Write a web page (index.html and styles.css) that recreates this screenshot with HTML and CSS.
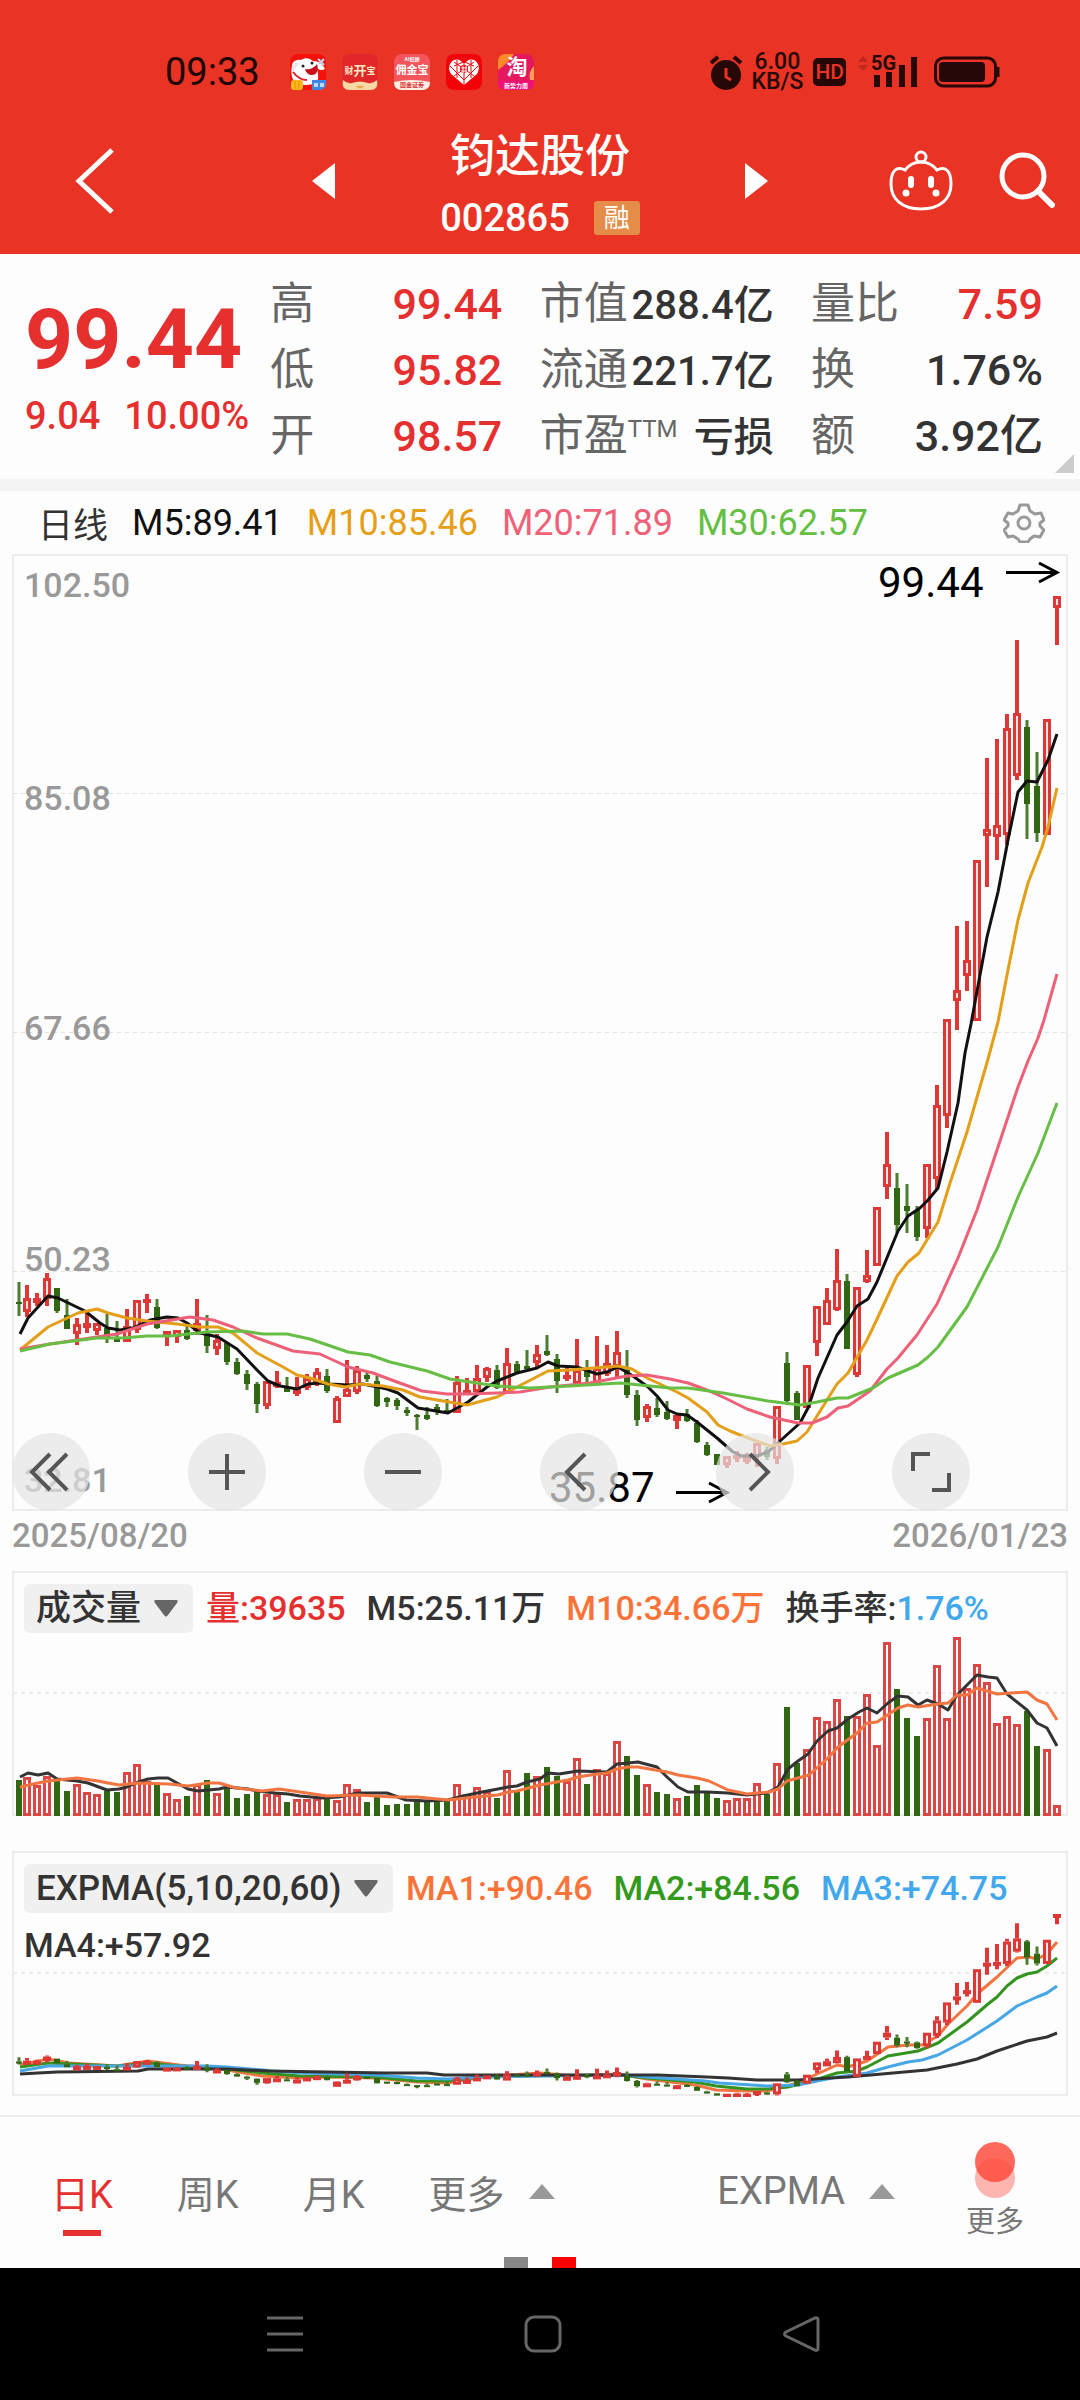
FILE: index.html
```html
<!DOCTYPE html>
<html lang="zh-CN">
<head>
<meta charset="utf-8">
<meta name="viewport" content="width=device-width, initial-scale=1">
<title>钧达股份 002865</title>
<link rel="stylesheet" href="styles.css">
</head>
<body>
<header class="top">
  <div class="status">
    <span class="clock">09:33</span>
    <div class="apps">
      <svg class="app" viewBox="0 0 36 36"><rect width="36" height="36" rx="8" fill="#f5120d"/><path d="M2 12c0-5 5-7 9-6 4-3 9-2 12 1 5 0 10 3 12 8-3 2-6 1-8-1 1 5 2 10 0 14-6 4-17 4-23-1-3-4-3-11-2-15z" fill="#fff"/><path d="M2 12c2-3 5-4 8-3-3 3-5 6-7 9z" fill="#e8e8ee"/><circle cx="13" cy="12" r="1.500" fill="#222"/><circle cx="22" cy="9" r="1.500" fill="#222"/><path d="M15 15c5 1 9-1 12-5 2 6 0 11-5 11-3 0-6-2-7-6z" fill="#c8101c"/><path d="M3 18q6 8 14 8" fill="none" stroke="#e0202a" stroke-width="2"/><path d="M28 5l6 6M34 5l-5 5" stroke="#bcd8ff" stroke-width="2"/><rect x="1" y="26" width="12" height="10" rx="3" fill="#fbb81a"/><path d="M5 27v8M9 27v8" stroke="#e88f0c" stroke-width="1"/><path d="M22 26h14v3q0 7-7 7h-7z" fill="#3f86e8"/><path d="M24 29h4v4h-4zM30 29h4v4h-4z" fill="#bcd8ff"/></svg>
      <svg class="app" viewBox="0 0 36 36"><rect width="36" height="36" rx="8" fill="#e1272a"/><path d="M1 26q4 4 9 3 8-3 16 0 5 1 9-3 2 10-7 10H8q-9 0-7-10z" fill="#f8d9a4"/><path d="M14 32q4 5 8 0z" fill="#f0a24a"/><text x="7" y="20" class="app-text" font-size="9" fill="#ffe9c4">财</text><text x="18" y="21" class="app-text" font-size="13" fill="#ffe9c4">开</text><text x="29" y="20" class="app-text" font-size="9" fill="#ffe9c4">宝</text></svg>
      <svg class="app" viewBox="0 0 36 36"><rect width="36" height="36" rx="8" fill="#f4545c"/><path d="M0 28q18-4 36 0 0 8-8 8H8q-8 0-8-8z" fill="#fff0e6"/><text x="18" y="7" class="app-text" font-size="5" fill="#fff">AI投顾</text><text x="18" y="20" class="app-text" font-size="11" fill="#fff">佣金宝</text><text x="18" y="33" class="app-text" font-size="6" fill="#d33">国金证券</text></svg>
      <svg class="app" viewBox="0 0 36 36"><rect width="36" height="36" rx="8" fill="#f40009"/><path d="M18 31L5 20C0 12 6 3 14 6l4 4 4-4c8-3 14 6 9 14z" fill="#fff"/><path d="M4 12l14 14M8 8l20 14M14 6l14 6M32 12L18 26M28 8L8 22M22 6L8 12M11 6v18M25 6v18M18 10v4M18 19v12" stroke="#f40009" stroke-width="1"/><circle cx="18" cy="15" r="4" fill="#f40009"/><path d="M15 14h6M15 17h6M17 12v7M20 12v7" stroke="#fff"/></svg>
      <svg class="app" viewBox="0 0 36 36"><rect width="36" height="36" rx="8" fill="#e5185f"/><path d="M0 16V8q0-8 8-8h8q-4 8-16 16z" fill="#ff8a2a"/><path d="M36 12q-6 6-4 14h4z" fill="#ffa05a"/><path d="M0 27h36v1q0 8-8 8H8q-8 0-8-8z" fill="#f0107a"/><text x="19" y="20" class="app-text" font-size="21" fill="#fff">淘</text><text x="18" y="34" class="app-text" font-size="6" fill="#fff">新势力周</text></svg>
    </div>
    <div class="status-right">
      <svg class="alarm" viewBox="0 0 34 36"><circle cx="17" cy="21" r="15" fill="#260906"/><path d="M2 9l7-6M25 3l7 6" stroke="#260906" stroke-width="4"/><path d="M17 14v9l5 3" fill="none" stroke="#e93325" stroke-width="3"/></svg>
      <span class="speed">6.00<br>KB/S</span>
      <span class="hd">HD</span>
      <svg class="signal" viewBox="0 0 60 34"><path d="M0 7l5-6 5 6zM0 10h10l-5 6z" fill="#bd2a1c"/><text x="13" y="15" class="net">5G</text><path d="M16 20h6v12h-6zM28 17h6v15h-6zM41 10h6v22h-6zM53 2h6v30h-6z" fill="#260906"/></svg>
      <svg class="battery" viewBox="0 0 66 32"><rect x="1.500" y="2" width="60" height="28" rx="8" fill="none" stroke="#260906" stroke-width="3"/><rect x="5" y="6" width="46" height="20" rx="4" fill="#260906"/><path d="M64 11v10" stroke="#260906" stroke-width="3"/></svg>
    </div>
  </div>
  <nav class="title-bar">
    <button class="icon-btn back" aria-label="返回"><svg width="40" height="66" viewBox="0 0 40 66"><path d="M37 2L4 33l33 31" fill="none" stroke="#fff" stroke-width="5"/></svg></button>
    <div class="stock">
      <button class="icon-btn" aria-label="上一只"><svg width="23" height="36" viewBox="0 0 23 36"><path d="M23 0v36L0 18z" fill="#fff"/></svg></button>
      <div class="name">
        <h1>钧达股份</h1>
        <p><span>002865</span><span class="badge">融</span></p>
      </div>
      <button class="icon-btn" aria-label="下一只"><svg width="23" height="36" viewBox="0 0 23 36"><path d="M0 0v36l23-18z" fill="#fff"/></svg></button>
    </div>
    <div class="actions">
      <button class="icon-btn" aria-label="助手"><svg width="64" height="62" viewBox="0 0 64 62"><g fill="none" stroke="#fff" stroke-width="3"><circle cx="32" cy="7" r="5"/><path d="M32 12c-8 0-12 3-16 8C8 16 2 20 2 34c0 15 11 25 30 25s30-10 30-25c0-14-6-18-14-14-4-5-8-8-16-8z"/></g><path d="M22 29v6M42 29v6" stroke="#fff" stroke-width="6" stroke-linecap="round"/><circle cx="17" cy="43" r="3.500" fill="#fff"/><circle cx="47" cy="43" r="3.500" fill="#fff"/></svg></button>
      <button class="icon-btn" aria-label="搜索"><svg width="56" height="58" viewBox="0 0 56 58"><circle cx="24" cy="24" r="21" fill="none" stroke="#fff" stroke-width="5"/><path d="M39 39l14 14" stroke="#fff" stroke-width="6" stroke-linecap="round"/></svg></button>
    </div>
  </nav>
</header>

<main>
  <section class="quote">
    <div class="last">
      <strong>99.44</strong>
      <p><span>9.04</span><span>10.00%</span></p>
    </div>
    <dl class="stats">
      <div><dt>高</dt><dd class="up">99.44</dd></div>
      <div><dt>低</dt><dd class="up">95.82</dd></div>
      <div><dt>开</dt><dd class="up">98.57</dd></div>
    </dl>
    <dl class="stats stats-mid">
      <div><dt>市值</dt><dd>288.4亿</dd></div>
      <div><dt>流通</dt><dd>221.7亿</dd></div>
      <div><dt>市盈<sup>TTM</sup></dt><dd>亏损</dd></div>
    </dl>
    <dl class="stats">
      <div><dt>量比</dt><dd class="up">7.59</dd></div>
      <div><dt>换</dt><dd>1.76%</dd></div>
      <div><dt>额</dt><dd>3.92亿</dd></div>
    </dl>
    <svg class="corner" viewBox="0 0 19 19"><path d="M19 0v19H0z" fill="#ccc"/></svg>
  </section>

  <div class="averages">
    <span class="period">日线</span>
    <span class="m5">M5:89.41</span>
    <span class="m10">M10:85.46</span>
    <span class="m20">M20:71.89</span>
    <span class="m30">M30:62.57</span>
    <button class="icon-btn gear" aria-label="设置"><svg width="42" height="40" viewBox="0 0 42 40"><g fill="none" stroke="#999" stroke-width="3" stroke-linejoin="round"><path d="M17 2h8l2 6 5 3 6-1 3 7-4 3v3l4 4-4 7-6-1-4 3-2 3h-8l-2-3-5-3-5 1-4-7 4-4v-3l-4-3 4-7 5 1 5-3z"/><circle cx="21" cy="20" r="6"/></g></svg></button>
  </div>

  <section class="panel">
    <svg class="chart" id="price" viewBox="12 554 1056 957" role="img" aria-label="日K线图"></svg>
    <div class="tools">
      <button aria-label="最早"><svg viewBox="0 0 78 78"><path d="M38 21L20 39l18 18M55 21L37 39l18 18"/></svg></button>
      <button aria-label="放大"><svg viewBox="0 0 78 78"><path d="M21 39h36M39 21v36"/></svg></button>
      <button aria-label="缩小"><svg viewBox="0 0 78 78"><path d="M21 39h36"/></svg></button>
      <button aria-label="向左"><svg viewBox="0 0 78 78"><path d="M45 21L27 39l18 18"/></svg></button>
      <button aria-label="向右"><svg viewBox="0 0 78 78"><path d="M34 21l18 18-18 18"/></svg></button>
      <button aria-label="全屏"><svg viewBox="0 0 78 78"><path d="M21 38V21h17M57 40v17H40"/></svg></button>
    </div>
  </section>
  <div class="dates"><time>2025/08/20</time><time>2026/01/23</time></div>

  <section class="panel">
    <svg class="chart" id="volume" viewBox="12 1571 1056 246" role="img" aria-label="成交量图"></svg>
    <div class="legend">
      <div class="picker"><select aria-label="指标"><option>成交量</option></select><svg viewBox="0 0 24 17"><path d="M2 0h20q3 0 1 3L14 15q-2 3-4 0L1 3Q-1 0 2 0z" fill="#666"/></svg></div>
      <span class="up">量:39635</span>
      <span>M5:25.11万</span>
      <span class="orange">M10:34.66万</span>
      <span>换手率:<span class="blue">1.76%</span></span>
    </div>
  </section>

  <section class="panel panel-last">
    <svg class="chart" id="expma" viewBox="12 1851 1056 246" role="img" aria-label="EXPMA图"></svg>
    <div class="legend">
      <div class="picker"><select aria-label="指标"><option>EXPMA(5,10,20,60)</option></select><svg viewBox="0 0 24 17"><path d="M2 0h20q3 0 1 3L14 15q-2 3-4 0L1 3Q-1 0 2 0z" fill="#666"/></svg></div>
      <span class="orange">MA1:+90.46</span>
      <span class="green">MA2:+84.56</span>
      <span class="blue">MA3:+74.75</span>
      <span>MA4:+57.92</span>
    </div>
  </section>
</main>

<footer>
  <div class="tabs">
    <button class="tab active">日K</button>
    <button class="tab">周K</button>
    <button class="tab">月K</button>
    <button class="tab">更多<svg viewBox="0 0 26 15"><path d="M13 0l13 15H0z"/></svg></button>
    <button class="tab indicator">EXPMA<svg viewBox="0 0 26 15"><path d="M13 0l13 15H0z"/></svg></button>
    <button class="more"><svg width="40" height="56" viewBox="0 0 40 56"><circle cx="20" cy="36" r="20" fill="#ff5a50" fill-opacity="0.450"/><circle cx="20" cy="20" r="20" fill="#ff4b3c" fill-opacity="0.830"/></svg>更多</button>
    <div class="pages"><i></i><i class="current"></i></div>
  </div>
  <nav class="system">
    <button class="icon-btn" aria-label="菜单"><svg width="38" height="38" viewBox="0 0 38 38"><path d="M1 3h36M1 19h36M1 35h36"/></svg></button>
    <button class="icon-btn" aria-label="主页"><svg width="38" height="38" viewBox="0 0 38 38"><rect x="2" y="2" width="34" height="34" rx="8"/></svg></button>
    <button class="icon-btn" aria-label="后退"><svg width="38" height="38" viewBox="0 0 38 38"><path d="M33 3q3-1 3 2v28q0 3-3 2L4 21q-3-2 0-4z"/></svg></button>
  </nav>
</footer>
<script src="charts.js"></script>
</body>
</html>
```
FILE: styles.css
```css
* { box-sizing: border-box; }

body {
  margin: 0;
  background: #fdfdfd;
  color: #333;
  font-family: Roboto, "Noto Sans CJK SC", sans-serif;
}

h1, p, dl, dd { margin: 0; }

button, select {
  border: 0;
  padding: 0;
  background: none;
  color: inherit;
  font: inherit;
}

svg { display: block; }
.icon-btn { display: flex; }

.up { color: #e5302f; }
.orange { color: #fc7339; }
.blue { color: #42a8ee; }
.green { color: #339a1c; }

/* Header */
.top {
  background: #e93325;
  color: #fff;
  padding-top: 44px;
}

.status {
  display: flex;
  align-items: center;
  height: 56px;
  padding: 0 80px 0 165px;
  color: #260906;
}
.clock { font-size: 38px; color: #1c0503; }
.apps { display: flex; gap: 16px; margin-left: 30px; }
.app { width: 36px; height: 36px; overflow: visible; }
.app-text { font-weight: 700; text-anchor: middle; }
.status-right { display: flex; align-items: center; margin-left: auto; }
.alarm { width: 34px; height: 36px; margin-right: 8px; }
.speed {
  font-size: 23px;
  font-weight: 500;
  line-height: 20px;
  text-align: center;
}
.hd {
  margin: 0 12px 0 10px;
  border-radius: 5px;
  padding: 0 2px;
  background: #260906;
  color: #e93325;
  font-size: 21px;
  font-weight: 500;
  line-height: 28px;
}
.signal { width: 60px; height: 34px; margin-right: 16px; }
.net { font-size: 20px; font-weight: 700; fill: #260906; }
.battery { width: 66px; height: 32px; }

.title-bar {
  display: grid;
  grid-template-columns: 1fr 457px 1fr;
  align-items: center;
  height: 154px;
  padding-top: 7px;
}
.back { margin-left: 75px; }
.stock {
  display: flex;
  justify-content: space-between;
  align-items: center;
}
.name { padding-top: 10px; text-align: center; }
.name h1 { font-size: 45px; font-weight: 500; line-height: 64px; }
.name p {
  display: flex;
  align-items: center;
  gap: 24px;
  font-size: 38px;
  font-weight: 500;
  line-height: 58px;
}
.badge {
  border-radius: 3px;
  padding: 0 10px;
  background: #e58c48;
  font-size: 26px;
  font-weight: 400;
  line-height: 34px;
}
.actions {
  display: flex;
  justify-content: flex-end;
  align-items: center;
  gap: 46px;
  padding-right: 25px;
}

/* Quote */
.quote {
  position: relative;
  display: grid;
  grid-template-columns: 208px 232px 234px 232px;
  justify-content: space-between;
  border-bottom: 12px solid #f4f4f4;
  padding: 17px 37px 10px 25px;
}
.last { padding-top: 18px; color: #e5302f; white-space: nowrap; }
.last strong { display: block; font-size: 84px; font-weight: 700; line-height: 102px; }
.last p { display: flex; gap: 24px; font-size: 38px; font-weight: 500; line-height: 50px; }
.stats div {
  display: flex;
  justify-content: space-between;
  align-items: baseline;
  height: 66px;
  font-size: 44px;
  line-height: 66px;
  white-space: nowrap;
}
.stats dt { color: #666; }
.stats dd { font-size: 43px; font-weight: 500; }
.stats-mid dd { font-size: 40px; }
.stats sup { font-size: 24px; line-height: 0; vertical-align: 14px; }
.corner { position: absolute; right: 6px; bottom: 6px; width: 19px; height: 19px; }

.averages {
  display: flex;
  align-items: center;
  gap: 24px;
  height: 63px;
  padding: 0 35px 0 38px;
  font-size: 36px;
}
.period { font-size: 35px; }
.m5 { color: #111; }
.m10 { color: #e69f17; }
.m20 { color: #f06078; }
.m30 { color: #64bf43; }
.gear { margin-left: auto; }

/* Charts */
.panel { position: relative; display: grid; margin: 0 12px; }
.panel > * { grid-area: 1 / 1; }
.panel-last { margin-top: 34px; margin-bottom: 18px; }
.chart { width: 100%; height: auto; }

.frame { fill: none; stroke: #ececec; stroke-width: 2; }
.grid { stroke: #e2e2e2; stroke-width: 1; stroke-dasharray: 4 4; }
.grid-thick { stroke: #ececec; stroke-width: 2; stroke-dasharray: 4 4; }
.wick-up { stroke: #df3636; stroke-width: 4; }
.wick-down { stroke: #4c7d31; stroke-width: 3; }
.body-up { fill: #fce4e4; stroke: #df3636; stroke-width: 3; }
.body-down { fill: #316613; }
.bar-up { fill: #fff; stroke: #de4545; stroke-width: 3; }
.line { fill: none; stroke-width: 3; stroke-linejoin: round; }
.axis { fill: #999; font-size: 34px; font-weight: 500; }
.mark { fill: #000; font-size: 42px; }
.arrow { fill: none; stroke: #000; stroke-width: 3; }

.tools { display: flex; gap: 98px; align-self: end; }
.tools button {
  width: 78px;
  height: 78px;
  border-radius: 50%;
  background: rgba(228, 228, 228, 0.7);
}
.tools path { fill: none; stroke: #555; stroke-width: 4; }

.dates {
  display: flex;
  justify-content: space-between;
  padding: 0 12px 10px;
  color: #999;
  font-size: 33px;
  font-weight: 500;
  line-height: 50px;
}

.legend {
  display: flex;
  flex-wrap: wrap;
  align-self: start;
  gap: 8px 21px;
  padding: 13px 12px 0;
  font-size: 34px;
  font-weight: 500;
  line-height: 49px;
}
.picker {
  display: flex;
  align-items: center;
  gap: 12px;
  height: 49px;
  margin-right: -8px;
  border-radius: 6px;
  padding: 0 15px 0 12px;
  background: #f0f0f0;
  font-size: 35px;
}
.picker select { appearance: none; line-height: 49px; }
.picker svg { width: 24px; height: 17px; }

/* Bottom */
.tabs {
  position: relative;
  display: flex;
  gap: 64px;
  height: 153px;
  border-top: 2px solid #ececec;
  padding: 0 56px 3px 51px;
  color: #777;
}
.tab {
  position: relative;
  display: flex;
  align-items: center;
  gap: 24px;
  font-size: 38px;
}
.tab svg { width: 26px; height: 15px; fill: #999; }
.active { color: #e5302f; }
.active::after {
  content: "";
  position: absolute;
  bottom: 29px;
  left: 50%;
  width: 38px;
  height: 6px;
  margin-left: -19px;
  background: #e5302f;
}
.indicator { margin: 0 7px 0 auto; }
.more {
  display: flex;
  flex-direction: column;
  align-items: center;
  padding-top: 25px;
  font-size: 29px;
  line-height: 48px;
}
.pages {
  position: absolute;
  bottom: 0;
  left: 50%;
  display: flex;
  gap: 24px;
  transform: translateX(-50%);
}
.pages i { width: 24px; height: 11px; background: #888; }
.pages .current { background: #f00; }

.system {
  display: flex;
  justify-content: space-between;
  height: 132px;
  padding: 47px 260px 0 266px;
  background: #000;
}
.system svg { fill: none; stroke: #666; stroke-width: 3; }
```
FILE: charts.js
```js
// One entry per trading day: direction, high, body top, body bottom, low (chart y units).
const days = `g 1282 1302 1303 1316,r 1285 1298 1312 1317,r 1293 1298 1303 1306,r 1273 1278 1299 1306,g 1288 1288 1311 1313,
g 1299 1315 1329 1329,r 1318 1324 1334 1345,r 1313 1323 1328 1333,r 1323 1323 1331 1335,g 1314 1328 1337 1343,
g 1321 1339 1342 1342,r 1309 1326 1342 1342,r 1300 1300 1330 1333,r 1294 1299 1303 1313,g 1299 1307 1328 1329,
r 1331 1331 1336 1346,r 1330 1330 1337 1343,g 1323 1330 1339 1340,r 1299 1323 1331 1335,g 1315 1332 1346 1353,
r 1334 1340 1349 1355,g 1342 1343 1362 1365,g 1358 1362 1374 1375,g 1370 1374 1384 1390,g 1382 1384 1404 1413,
r 1381 1381 1406 1409,r 1371 1382 1387 1388,g 1377 1387 1392 1392,r 1377 1388 1394 1396,r 1374 1378 1388 1390,
r 1368 1372 1382 1386,g 1369 1376 1391 1393,r 1396 1398 1423 1423,r 1360 1389 1397 1397,r 1366 1370 1392 1394,
g 1373 1375 1379 1382,g 1376 1381 1406 1407,g 1397 1398 1402 1407,g 1398 1400 1406 1410,g 1407 1410 1413 1416,
g 1414 1415 1417 1430,g 1407 1415 1419 1420,g 1404 1407 1410 1415,g 1399 1410 1413 1414,r 1376 1382 1413 1413,
r 1378 1390 1393 1393,r 1365 1378 1392 1393,r 1367 1368 1378 1382,g 1365 1370 1388 1389,r 1348 1363 1393 1393,
g 1361 1364 1372 1373,g 1350 1366 1369 1370,r 1345 1354 1363 1368,g 1335 1351 1355 1356,g 1354 1359 1381 1393,
r 1367 1375 1379 1381,r 1339 1370 1384 1387,g 1360 1368 1377 1382,r 1336 1368 1383 1383,r 1345 1363 1374 1376,
r 1331 1352 1367 1377,g 1350 1370 1395 1398,g 1390 1395 1420 1426,r 1404 1406 1418 1422,g 1398 1408 1415 1417,
g 1401 1412 1419 1420,r 1414 1415 1421 1429,g 1409 1414 1421 1422,g 1420 1423 1442 1443,g 1442 1445 1455 1456,
g 1454 1454 1465 1465,r 1456 1456 1465 1468,r 1451 1455 1458 1462,r 1453 1456 1462 1464,r 1443 1443 1457 1467,
g 1447 1450 1457 1460,r 1406 1406 1459 1464,g 1352 1363 1401 1405,g 1391 1393 1420 1420,r 1365 1365 1408 1408,
r 1306 1306 1343 1356,r 1288 1300 1325 1325,r 1249 1280 1310 1311,g 1274 1281 1349 1349,r 1287 1287 1375 1377,
r 1250 1275 1282 1283,r 1207 1207 1266 1266,r 1132 1164 1187 1199,g 1173 1188 1225 1233,g 1184 1206 1211 1233,
g 1206 1210 1237 1241,r 1164 1164 1229 1238,r 1085 1105 1179 1189,r 1019 1019 1116 1128,r 926 990 1001 1030,
r 921 960 976 991,r 860 860 1021 1021,r 758 829 836 887,r 739 825 837 860,r 714 728 835 845,
r 640 713 776 780,g 720 727 804 839,g 752 786 833 842,r 719 719 835 835,r 596 596 608 645`
  .split(",").map(s => {
    const [dir, ...v] = s.trim().split(" ");
    return [dir, ...v.map(Number)];
  });

const volumes = [36,39,31,40,37,25,32,24,22,25,24,44,52,35,31,23,17,20,32,36,23,29,18,22,24,22,22,14,17,17,18,17,16,32,27,
14,19,11,12,12,17,14,14,15,32,22,29,25,18,46,26,43,40,49,40,35,58,32,47,43,75,60,41,32,24,22,18,20,31,24,18,16,18,18,33,
22,53,109,53,67,99,95,117,100,100,122,71,174,127,98,80,98,151,98,179,128,152,134,93,100,92,105,70,67,11];

const priceLines = {
  "#111": "20,1334 28,1318 48,1296 58,1298 85,1311 100,1323 108,1328 120,1330 133,1328 150,1320 167,1317 178,1318 187,1323 200,1333 218,1337 237,1349 257,1370 268,1381 280,1386 297,1389 308,1384 318,1383 330,1384 348,1385 363,1384 378,1387 387,1389 398,1393 418,1408 430,1410 448,1413 468,1402 487,1387 497,1381 517,1373 537,1368 548,1362 558,1366 577,1367 597,1374 607,1372 618,1367 633,1376 648,1387 657,1396 668,1410 677,1414 687,1415 697,1422 717,1438 733,1452 742,1456 757,1456 768,1452 780,1441 800,1423 808,1408 818,1378 837,1335 847,1322 857,1306 868,1299 877,1282 898,1231 908,1216 920,1208 928,1200 938,1188 947,1152 958,1103 965,1053 971,1024 987,937 998,892 1008,840 1018,792 1027,781 1037,782 1048,760 1057,734",
  "#e59e18": "20,1350 48,1327 63,1320 78,1313 97,1309 108,1313 127,1318 147,1321 177,1324 200,1327 218,1327 233,1333 257,1353 283,1367 297,1375 310,1378 328,1384 345,1387 360,1384 383,1386 403,1390 420,1397 437,1400 467,1405 497,1397 517,1387 548,1371 570,1370 618,1366 632,1369 647,1378 677,1392 688,1398 707,1412 718,1425 730,1431 740,1435 770,1446 783,1444 797,1441 807,1432 822,1408 837,1384 848,1373 867,1340 878,1317 897,1276 908,1262 919,1253 938,1222 950,1183 967,1132 988,1059 998,1022 1008,970 1018,920 1028,883 1042,847 1048,827 1057,788",
  "#ee6077": "20,1349 50,1344 117,1334 147,1324 190,1317 213,1320 233,1327 257,1338 293,1351 320,1354 348,1367 373,1373 397,1382 422,1391 447,1394 470,1394 520,1392 550,1387 590,1383 627,1376 647,1375 670,1379 688,1383 707,1390 725,1398 747,1409 770,1417 798,1423 812,1423 827,1417 838,1408 848,1406 870,1391 887,1369 898,1358 907,1347 917,1335 937,1304 958,1258 977,1210 998,1147 1018,1087 1028,1061 1038,1038 1044,1020 1057,974",
  "#66be45": "20,1351 50,1344 97,1338 123,1338 147,1336 170,1336 207,1332 243,1331 263,1334 287,1334 310,1339 348,1352 370,1355 390,1362 427,1371 450,1379 497,1386 530,1388 570,1386 620,1383 670,1388 688,1388 723,1393 768,1401 800,1405 817,1402 837,1398 848,1398 873,1388 888,1378 918,1365 928,1357 938,1347 967,1307 998,1247 1018,1197 1038,1153 1057,1103"
};

const volumeLines = {
  "#333": "20,1777 28,1773 38,1775 48,1773 57,1779 77,1781 88,1783 107,1790 119,1789 127,1787 138,1782 148,1779 158,1778 168,1778 177,1783 188,1789 198,1791 219,1789 227,1787 248,1789 257,1791 275,1793 288,1794 300,1796 322,1798 339,1797 358,1793 387,1793 406,1800 427,1801 448,1800 463,1796 482,1792 498,1789 508,1787 517,1786 527,1782 540,1779 548,1773 559,1774 578,1771 607,1772 617,1764 628,1763 638,1762 657,1767 667,1777 678,1787 688,1792 707,1792 728,1793 747,1795 767,1793 778,1787 788,1769 798,1761 808,1754 817,1741 828,1731 837,1728 848,1719 859,1712 867,1708 877,1713 888,1703 898,1696 908,1697 918,1705 927,1700 938,1704 948,1710 957,1695 977,1675 988,1677 997,1678 1007,1694 1027,1710 1037,1723 1047,1728 1057,1746",
  "#f27440": "20,1787 38,1783 48,1781 77,1778 98,1781 108,1783 119,1785 138,1783 169,1784 188,1786 208,1783 219,1783 236,1788 262,1791 279,1789 300,1792 327,1796 358,1795 394,1797 417,1797 448,1800 475,1797 498,1795 508,1792 517,1791 540,1785 568,1780 578,1777 597,1774 607,1773 617,1769 628,1767 638,1767 667,1772 678,1775 697,1778 709,1781 728,1790 747,1794 769,1792 778,1789 787,1781 798,1778 809,1775 828,1758 838,1747 857,1733 867,1723 877,1722 898,1708 908,1705 918,1707 938,1704 948,1703 957,1695 967,1695 977,1688 997,1694 1027,1692 1037,1700 1047,1704 1057,1720"
};

const expmaLines = {
  "#f27440": "20,2065 48,2059 69,2063 117,2066 148,2061 179,2065 210,2068 227,2070 262,2076 300,2078 327,2077 375,2078 417,2082 448,2083 482,2077 510,2075 540,2073 574,2076 619,2074 647,2079 695,2085 716,2090 747,2091 767,2091 798,2083 817,2074 837,2065 848,2067 867,2061 888,2047 908,2045 922,2045 938,2036 948,2024 967,2006 977,1994 997,1977 1017,1958 1029,1957 1037,1959 1047,1954 1057,1942",
  "#34931f": "20,2067 48,2063 117,2066 148,2063 179,2066 227,2069 262,2073 300,2076 375,2077 417,2081 448,2081 482,2077 510,2076 619,2075 647,2078 695,2082 716,2086 747,2089 767,2089 788,2087 815,2080 837,2073 857,2071 867,2067 888,2056 918,2051 938,2043 967,2022 988,2004 997,1997 1007,1986 1017,1978 1027,1974 1037,1972 1047,1966 1057,1958",
  "#47a6e6": "20,2071 48,2066 138,2066 207,2066 227,2067 262,2070 300,2073 375,2075 417,2078 448,2079 482,2077 540,2076 626,2075 647,2077 705,2081 719,2083 767,2086 798,2085 817,2081 837,2077 867,2073 888,2067 908,2062 922,2060 938,2055 967,2040 997,2021 1017,2006 1037,1997 1047,1993 1057,1986",
  "#333": "20,2074 38,2073 57,2072 138,2071 148,2069 227,2069 269,2071 327,2072 386,2073 427,2073 444,2075 628,2075 657,2075 707,2077 728,2078 757,2080 798,2080 848,2077 927,2070 957,2064 977,2059 997,2051 1027,2041 1047,2037 1057,2033"
};

const dayX = i => i === 0 ? 19 : 17 + i * 10;

function frame(top, bottom, gridRows, gridClass) {
  return `<rect class="frame" x="13" y="${top}" width="1054" height="${bottom - top}"/>` +
    gridRows.map(y => `<path class="${gridClass}" d="M13 ${y}H1066"/>`).join("");
}

function candles(scaleY) {
  return days.map(([dir, ...values], i) => {
    const x = dayX(i);
    const [high, top, bottom, low] = values.map(scaleY);
    const up = dir === "r";
    const wick = `<path class="wick-${up ? "up" : "down"}" d="M${x} ${high}V${top}M${x} ${bottom}V${low}"/>`;
    const body = up
      ? `<rect class="body-up" x="${x - 2.5}" y="${top + 1.5}" width="5" height="${Math.max(bottom - top - 3, 1)}"/>`
      : `<rect class="body-down" x="${x - 3}" y="${top}" width="6" height="${Math.max(bottom - top, 2)}"/>`;
    return wick + body;
  }).join("");
}

function lines(set) {
  return Object.entries(set)
    .map(([color, points]) => `<polyline class="line" stroke="${color}" points="${points}"/>`).join("");
}

const axis = [["102.50", 597], ["85.08", 810], ["67.66", 1040], ["50.23", 1271], ["32.81", 1492]]
  .map(([label, y]) => `<text class="axis" x="24" y="${y}">${label}</text>`).join("");

document.getElementById("price").innerHTML =
  frame(555, 1510, [793.5, 1032.5, 1271.5], "grid") + axis + candles(y => y) + lines(priceLines) +
  `<text class="mark" x="878" y="597">99.44</text><path class="arrow" d="M1006 572.5h50M1039 563l18 9.500-18 9.500"/>` +
  `<text class="mark" x="549" y="1502">35.87</text><path class="arrow" d="M676 1492.500h50M709 1483l18 9.500-18 9.500"/>`;

document.getElementById("volume").innerHTML =
  frame(1572, 1815, [1693], "grid-thick") +
  volumes.map((h, i) => days[i][0] === "r"
    ? `<rect class="bar-up" x="${dayX(i) - 2.5}" y="${1817.5 - h}" width="5" height="${h - 3}"/>`
    : `<rect class="body-down" x="${dayX(i) - 3}" y="${1816 - h}" width="6" height="${h}"/>`).join("") +
  lines(volumeLines);

document.getElementById("expma").innerHTML =
  frame(1852, 2095, [1973], "grid-thick") + lines(expmaLines) +
  candles(y => 1914 + (y - 596) * 0.209);
```
